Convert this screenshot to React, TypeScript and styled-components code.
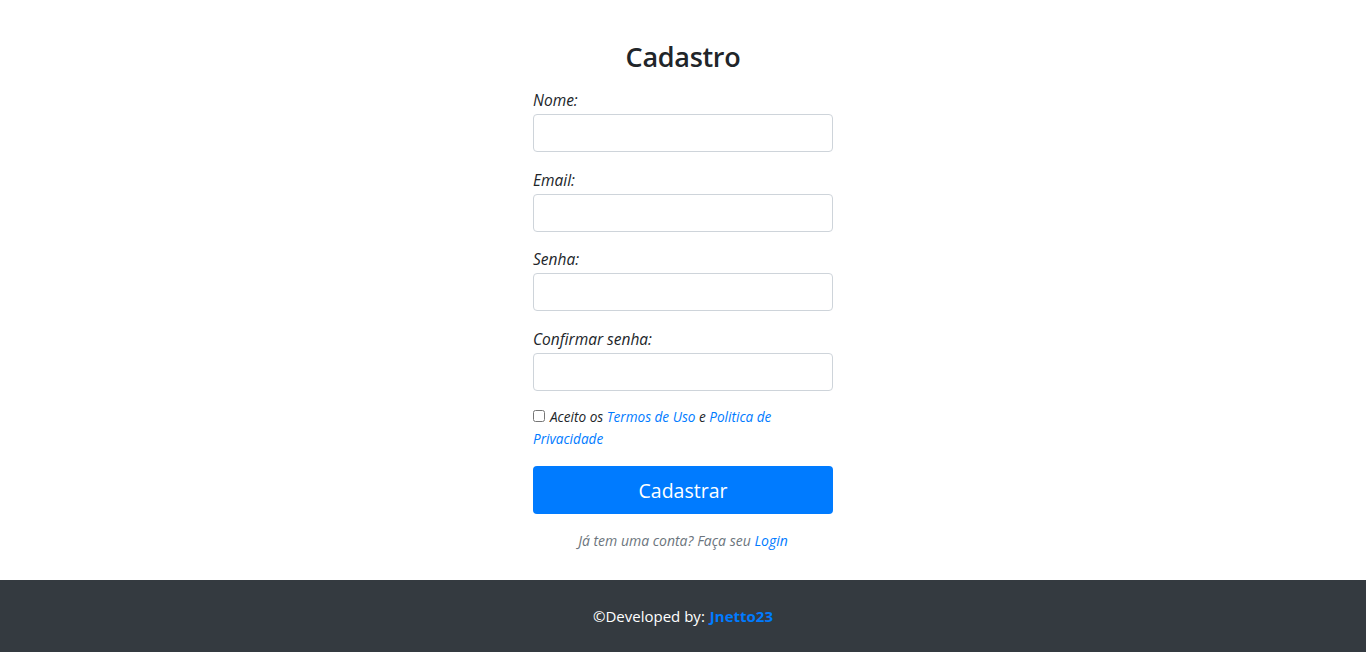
import React from "react";
import styled, { createGlobalStyle } from "styled-components";

const Global = createGlobalStyle`
  html, body { margin: 0; padding: 0; }
  body {
    font-family: "Open Sans", "Noto Sans", "Liberation Sans", sans-serif;
    color: #212529;
    background: #fff;
  }
  * { box-sizing: border-box; }
`;

const Page = styled.div`
  min-height: 652px;
  display: flex;
  flex-direction: column;
`;

const Main = styled.main`
  flex: 1;
  display: flex;
  justify-content: center;
  padding-top: 40px;
`;

const Form = styled.form`
  width: 300px;
  display: flex;
  flex-direction: column;
`;

const Title = styled.h3`
  margin: 0 0 14px;
  font-size: 27px;
  font-weight: 600;
  line-height: 34px;
  text-align: center;
  color: #212529;
  letter-spacing: -0.3px;
`;

const Group = styled.div`
  display: flex;
  flex-direction: column;
  margin-bottom: 15.5px;
`;

const Label = styled.label`
  font-size: 15.5px;
  font-style: italic;
  line-height: 24px;
  margin-bottom: 2px;
  color: #212529;
`;

const Input = styled.input`
  height: 38px;
  width: 100%;
  border: 1px solid #ced4da;
  border-radius: 4px;
  padding: 6px 12px;
  font-size: 16px;
  outline: none;
`;

const Terms = styled.div`
  font-size: 13.6px;
  font-style: italic;
  line-height: 22px;
  margin-top: 0;
  color: #212529;
`;

const Check = styled.input`
  width: 12px;
  height: 12px;
  margin: 0 5px 0 0;
  vertical-align: 0px;
  accent-color: #888;
`;

const Link = styled.a`
  color: #007bff;
  text-decoration: none;
`;

const Button = styled.button`
  margin-top: 16px;
  height: 48px;
  width: 100%;
  background: #007bff;
  color: #fff;
  border: none;
  border-radius: 4px;
  font-family: inherit;
  font-size: 19.5px;
  cursor: pointer;
`;

const Small = styled.p`
  margin: 17px 0 0;
  text-align: center;
  font-size: 14px;
  font-style: italic;
  color: #6c757d;
  line-height: 20px;
`;

const Footer = styled.footer`
  height: 72px;
  background: #343a40;
  color: #fff;
  display: flex;
  align-items: center;
  justify-content: center;
  font-size: 15px;
  margin-top: 20px;
`;

const Strong = styled.a`
  color: #007bff;
  font-weight: 700;
  text-decoration: none;
  margin-left: 5px;
`;

const fields = ["Nome:", "Email:", "Senha:", "Confirmar senha:"];

export default function App() {
  return (
    <Page>
      <Global />
      <Main>
        <Form onSubmit={(e) => e.preventDefault()}>
          <Title>Cadastro</Title>
          {fields.map((f, i) => (
            <Group key={f}>
              <Label htmlFor={`f${i}`}>{f}</Label>
              <Input id={`f${i}`} type={i >= 2 ? "password" : "text"} />
            </Group>
          ))}
          <Terms>
            <Check type="checkbox" />
            Aceito os <Link href="#">Termos de Uso</Link> e{" "}
            <Link href="#">Politica de Privacidade</Link>
          </Terms>
          <Button type="submit">Cadastrar</Button>
          <Small>
            Já tem uma conta? Faça seu <Link href="#">Login</Link>
          </Small>
        </Form>
      </Main>
      <Footer>
        ©Developed by:<Strong href="#">Jnetto23</Strong>
      </Footer>
    </Page>
  );
}
